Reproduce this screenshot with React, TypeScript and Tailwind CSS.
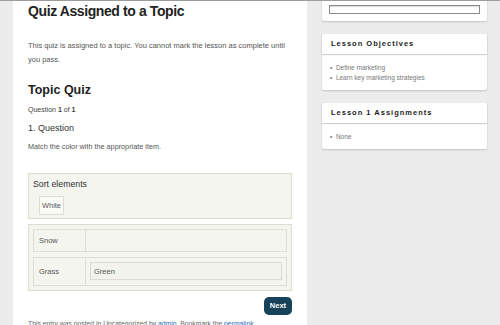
export default function App() {
  return (
    <div
      className="flex h-[325px] w-[500px] overflow-hidden border-t border-[#9c9c9c] bg-[#ececec]"
      style={{ fontFamily: '"Liberation Sans", Arial, sans-serif' }}
    >
      {/* left gutter */}
      <div className="w-[13px] shrink-0" />

      {/* main column */}
      <main className="w-[294px] shrink-0 bg-white px-[15px] text-[#555]">
        <h1 className="mt-[1px] text-[14px] font-bold leading-[18px] tracking-[-0.4px] text-[#222]">
          Quiz Assigned to a Topic
        </h1>
        <p className="mt-[19px] text-[7.5px] leading-[14px]">
          This quiz is assigned to a topic. You cannot mark the lesson as complete until you pass.
        </p>
        <h2 className="mt-[15px] text-[12.5px] font-bold leading-[16px] text-[#222]">Topic Quiz</h2>
        <p className="mt-[7px] text-[7px] leading-[10px] text-[#444]">
          Question <b>1</b> of <b>1</b>
        </p>
        <h3 className="mt-[7px] text-[9px] leading-[12px] text-[#333]">1. Question</h3>
        <p className="mt-[8px] text-[7.25px] leading-[10px] text-[#555]">
          Match the color with the appropriate item.
        </p>

        {/* sort elements */}
        <div className="mt-[21px] h-[46px] border border-[#dddccf] bg-[#f5f5ef] px-[4px] pt-[4px]">
          <div className="text-[8.75px] leading-[12px] text-[#333]">Sort elements</div>
          <div className="ml-[6px] mt-[6px] flex h-[19px] w-[25px] items-center justify-center border border-[#dcdcd4] bg-[#fafaf6] text-[7.4px] text-[#555]">
            White
          </div>
        </div>

        {/* matrix */}
        <div className="mt-[5px] flex h-[67px] flex-col gap-[5px] border border-[#dddccf] bg-[#f5f5ef] p-[4px]">
          <div className="flex h-[23px] border border-[#dfded4]">
            <div className="flex w-[52px] items-center border-r border-[#dfded4] pl-[5px] text-[7.5px] text-[#555]">
              Snow
            </div>
            <div className="flex-1" />
          </div>
          <div className="flex h-[30px] border border-[#dfded4]">
            <div className="flex w-[52px] items-center border-r border-[#dfded4] pl-[5px] text-[7.5px] text-[#555]">
              Grass
            </div>
            <div className="flex flex-1 items-center px-[4px]">
              <div className="flex h-[18px] w-full items-center border border-[#dcdcd4] bg-[#f3f3ed] pl-[3px] text-[7.5px] text-[#555]">
                Green
              </div>
            </div>
          </div>
        </div>

        <div className="mt-[6px] flex justify-end">
          <button className="h-[18px] w-[28px] rounded-[5px] bg-[#17435a] text-[7.5px] font-bold text-white">
            Next
          </button>
        </div>

        <p className="mt-[4px] whitespace-nowrap text-[6.8px] leading-[10px] text-[#666]">
          This entry was posted in Uncategorized by <span className="text-[#2a6ebb]">admin</span>. Bookmark the{" "}
          <span className="text-[#2a6ebb]">permalink</span>.
        </p>
      </main>

      {/* sidebar */}
      <aside className="flex flex-1 flex-col gap-[13px] pl-[15px] pr-[13px]">
        <div className="-mt-[4px] rounded-[2px] bg-white px-[7px] pb-[7px] pt-[8px] shadow-[0_1px_2px_rgba(0,0,0,0.18)]">
          <div className="h-[9px] border border-[#8a8a8a] bg-white shadow-[inset_0_1px_1px_rgba(0,0,0,0.15)]" />
        </div>

        <div className="rounded-[2px] bg-white shadow-[0_1px_2px_rgba(0,0,0,0.18)]">
          <div className="flex h-[20px] items-center px-[9px] text-[7.5px] font-bold tracking-[1px] text-[#222] shadow-[0_1px_1px_rgba(0,0,0,0.18)]">
            Lesson Objectives
          </div>
          <ul className="px-[8px] pb-[7px] pt-[9px] text-[6.5px] leading-[10px] text-[#777]">
            <li>• &nbsp;Define marketing</li>
            <li>• &nbsp;Learn key marketing strategies</li>
          </ul>
        </div>

        <div className="rounded-[2px] bg-white shadow-[0_1px_2px_rgba(0,0,0,0.18)]">
          <div className="flex h-[20px] items-center px-[9px] text-[7.5px] font-bold tracking-[1px] text-[#222] shadow-[0_1px_1px_rgba(0,0,0,0.18)]">
            Lesson 1 Assignments
          </div>
          <ul className="px-[8px] pb-[7px] pt-[9px] text-[6.5px] leading-[10px] text-[#777]">
            <li>• &nbsp;None</li>
          </ul>
        </div>
      </aside>
    </div>
  )
}
